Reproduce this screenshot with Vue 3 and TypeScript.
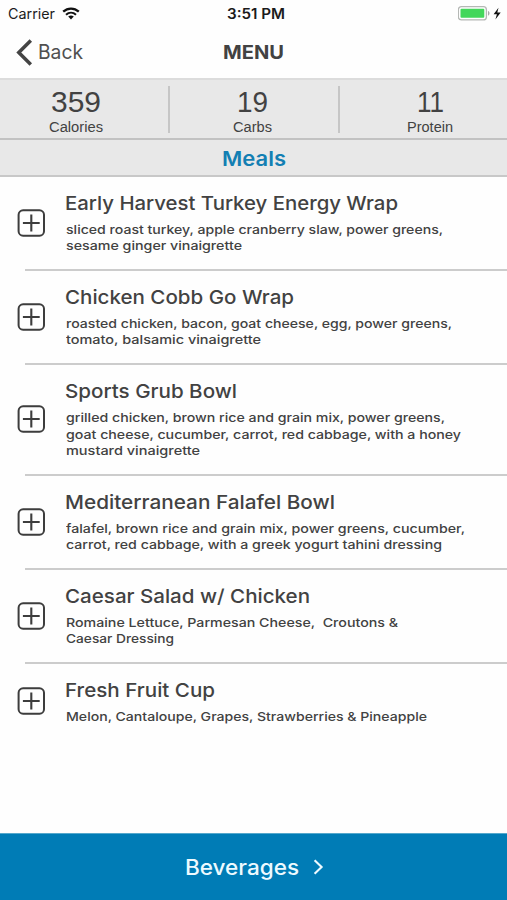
<script setup lang="ts">
interface Line {
  text: string
  width: number
}
interface Meal {
  title: Line
  lines: Line[]
}

const totals = [
  { value: { text: '359', width: 50 }, label: { text: 'Calories', width: 54 } },
  { value: { text: '19', width: 31 }, label: { text: 'Carbs', width: 39 } },
  { value: { text: '11', width: 27 }, label: { text: 'Protein', width: 46 } },
]

const meals: Meal[] = [
  {
    title: { text: 'Early Harvest Turkey Energy Wrap', width: 333 },
    lines: [
      { text: 'sliced roast turkey, apple cranberry slaw, power greens,', width: 377 },
      { text: 'sesame ginger vinaigrette', width: 176 },
    ],
  },
  {
    title: { text: 'Chicken Cobb Go Wrap', width: 229 },
    lines: [
      { text: 'roasted chicken, bacon, goat cheese, egg, power greens,', width: 386 },
      { text: 'tomato, balsamic vinaigrette', width: 195 },
    ],
  },
  {
    title: { text: 'Sports Grub Bowl', width: 172 },
    lines: [
      { text: 'grilled chicken, brown rice and grain mix, power greens,', width: 379 },
      { text: 'goat cheese, cucumber, carrot, red cabbage, with a honey', width: 395 },
      { text: 'mustard vinaigrette', width: 134 },
    ],
  },
  {
    title: { text: 'Mediterranean Falafel Bowl', width: 270 },
    lines: [
      { text: 'falafel, brown rice and grain mix, power greens, cucumber,', width: 399 },
      { text: 'carrot, red cabbage, with a greek yogurt tahini dressing', width: 376 },
    ],
  },
  {
    title: { text: 'Caesar Salad w/ Chicken', width: 245 },
    lines: [
      { text: 'Romaine Lettuce, Parmesan Cheese,\u00a0 Croutons &', width: 332 },
      { text: 'Caesar Dressing', width: 108 },
    ],
  },
  {
    title: { text: 'Fresh Fruit Cup', width: 150 },
    lines: [{ text: 'Melon, Cantaloupe, Grapes, Strawberries & Pineapple', width: 361 }],
  },
]

// Stretches a line of text to its set width and reserves that width in the layout.
const vFit = {
  mounted(el: HTMLElement, binding: { value: number }) {
    const natural = el.getBoundingClientRect().width
    el.style.width = `${binding.value}px`
    el.style.transform = `scaleX(${binding.value / natural})`
  },
}
</script>

<template>
  <div class="screen">
    <div class="status">
      <div class="carrier">
        <span v-fit="47" class="fit">Carrier</span>
        <svg width="18" height="13" viewBox="0 0 18 13" fill="none" stroke="#111">
          <path d="M1.2 4.7C5.8.5 12.2.5 16.8 4.7" stroke-width="2.3" />
          <path d="M4 7.7c3-2.7 7-2.7 10 0" stroke-width="2.1" />
          <path d="M6.2 9.6c1.7-1.4 3.9-1.4 5.6 0L9 12.5z" fill="#111" stroke="none" />
        </svg>
      </div>
      <span v-fit="58" class="fit clock">3:51 PM</span>
      <div class="power">
        <svg width="45" height="16" viewBox="0 0 45 16">
          <rect x=".4" y=".7" width="28" height="13.2" rx="3" fill="#fff" stroke="#b5b8b5" stroke-width="1.3" />
          <rect x="2.5" y="2.8" width="23.8" height="9" rx="1" fill="#43d75b" />
          <path d="M30 5c2 .7 2 4 0 4.7z" fill="#a9a9a9" />
          <path d="M40.5 1.7 35.6 8.3h3.3L37.4 13.5 42.7 6.5h-3.4z" fill="#111" />
        </svg>
      </div>
    </div>

    <header class="nav">
      <div class="back">
        <svg width="17" height="27" viewBox="0 0 17 27" fill="none" stroke="#444" stroke-width="3.5">
          <path d="M14.8 1.6 2.8 13.5l12 11.9" />
        </svg>
        <span v-fit="45" class="fit">Back</span>
      </div>
      <h1><span v-fit="61" class="fit">MENU</span></h1>
      <span></span>
    </header>

    <section class="totals">
      <div v-for="total in totals" :key="total.label.text" class="total">
        <span v-fit="total.value.width" class="fit value">{{ total.value.text }}</span>
        <span v-fit="total.label.width" class="fit label">{{ total.label.text }}</span>
      </div>
    </section>

    <h2><span v-fit="64" class="fit">Meals</span></h2>

    <main>
      <article v-for="meal in meals" :key="meal.title.text" class="meal">
        <svg class="add" width="28" height="28" viewBox="0 0 28 28" fill="none" stroke="#3d3d3d">
          <rect x="1.6" y="1.3" width="25.4" height="25.4" rx="4.5" stroke-width="2" />
          <path d="M14.3 5.6v16.8M5.9 14h16.8" stroke-width="2.1" />
        </svg>
        <div class="copy">
          <h3><span v-fit="meal.title.width" class="fit">{{ meal.title.text }}</span></h3>
          <p v-for="line in meal.lines" :key="line.text">
            <span v-fit="line.width" class="fit">{{ line.text }}</span>
          </p>
        </div>
      </article>
    </main>

    <footer>
      <span v-fit="114" class="fit">Beverages</span>
      <svg width="11" height="16" viewBox="0 0 11 16" fill="none" stroke="#eefaff" stroke-width="2.1">
        <path d="m1.6 1.2 7 6.8-7 6.8" />
      </svg>
    </footer>
  </div>
</template>

<style>
body {
  margin: 0;
  background: #fefefe;
}
</style>

<style scoped>
.screen {
  display: flex;
  flex-direction: column;
  box-sizing: border-box;
  width: 507px;
  height: 900px;
  overflow: hidden;
  background: #fefefe;
  color: #424242;
  font-family: Inter, "Liberation Sans", sans-serif;
}
h1,
h2,
h3,
p {
  margin: 0;
}
.fit {
  display: inline-block;
  white-space: nowrap;
  transform-origin: 0 50%;
}
.status {
  display: grid;
  grid-template-columns: 1fr auto 1fr;
  align-items: center;
  height: 27px;
  padding: 0 4px 0 8px;
  color: #1b1b1b;
  font-size: 14px;
  line-height: 27px;
}
.carrier {
  display: flex;
  align-items: center;
  gap: 7px;
}
.clock {
  font-weight: 600;
}
.power {
  display: flex;
  justify-content: flex-end;
}
.nav {
  display: grid;
  grid-template-columns: 1fr auto 1fr;
  align-items: center;
  height: 51px;
  padding: 0 16px;
}
.back {
  display: flex;
  align-items: center;
  gap: 5px;
  font-size: 20px;
  line-height: 27px;
  color: #505050;
}
h1 {
  font-size: 19px;
  line-height: 24px;
  font-weight: 700;
}
.totals {
  display: grid;
  grid-template-columns: 168px 170px 169px;
  box-sizing: border-box;
  height: 62px;
  padding: 6px 0 5px;
  border-top: 2px solid #dcdcdc;
  border-bottom: 2px solid #c2c2c2;
  background: #e8e8e8;
  font-family: "Liberation Sans", Arial, sans-serif;
}
.total {
  display: flex;
  flex-direction: column;
  align-items: center;
  box-sizing: border-box;
  height: 47px;
  padding-right: 16px;
}
.total + .total {
  padding-right: 4px;
  border-left: 2px solid #c6c6c6;
}
.total:last-child {
  padding-left: 17px;
}
.value {
  font-size: 29.5px;
  line-height: 32px;
}
.label {
  margin-top: 1px;
  font-size: 14px;
  line-height: 16px;
}
h2 {
  display: flex;
  justify-content: center;
  box-sizing: border-box;
  height: 37px;
  border-bottom: 2px solid #c8c8c8;
  background: #e8e8e8;
  color: #137fb3;
  font-size: 20.5px;
  font-weight: 600;
  line-height: 38px;
}
main {
  flex: 1;
}
.meal {
  display: flex;
  align-items: center;
  gap: 20px;
  margin-left: 17px;
  padding: 13px 0 15.3px;
  background: linear-gradient(#cccccc, #cccccc) 8px 100% / 100% 2px no-repeat;
}
.meal:last-child {
  background: none;
}
.add {
  flex: none;
}
.copy {
  padding-bottom: 1px;
}
h3 {
  height: 28px;
  font-size: 19px;
  font-weight: 500;
  line-height: 28px;
}
p {
  height: 16.4px;
  margin-left: 1px;
  font-size: 12.3px;
  font-weight: 500;
  line-height: 16.4px;
}
h3 + p {
  margin-top: 4px;
}
footer {
  display: flex;
  align-items: center;
  justify-content: center;
  gap: 14px;
  box-sizing: border-box;
  height: 67px;
  padding-left: 1px;
  border-top: 1px solid #55a8cc;
  background: #007cb6;
  color: #eefaff;
  font-size: 21px;
  font-weight: 500;
}
</style>
